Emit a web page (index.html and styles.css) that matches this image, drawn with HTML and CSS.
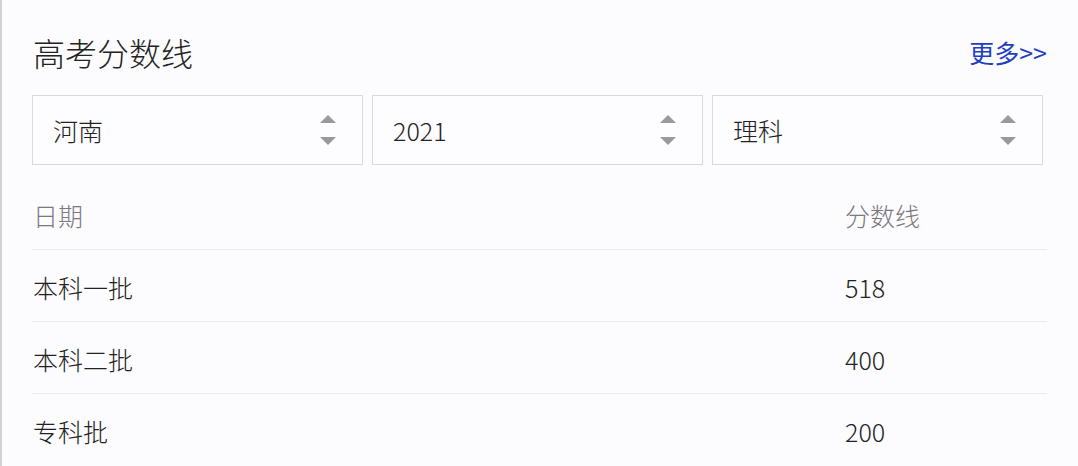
FILE: index.html
```html
<!DOCTYPE html>
<html lang="zh-CN">
<head>
<meta charset="utf-8">
<title>高考分数线</title>
<link rel="stylesheet" href="styles.css">
</head>
<body>
<div class="card">
  <div class="head">
    <h1 class="title">高考分数线</h1>
    <a class="more" href="#">更多&gt;&gt;</a>
  </div>
  <div class="selects">
    <div class="select"><span class="val">河南</span><span class="arrows"><i class="up"></i><i class="down"></i></span></div>
    <div class="select"><span class="val">2021</span><span class="arrows"><i class="up"></i><i class="down"></i></span></div>
    <div class="select"><span class="val">理科</span><span class="arrows"><i class="up"></i><i class="down"></i></span></div>
  </div>
  <div class="table">
    <div class="row th"><span class="c1">日期</span><span class="c2">分数线</span></div>
    <div class="row"><span class="c1">本科一批</span><span class="c2">518</span></div>
    <div class="row"><span class="c1">本科二批</span><span class="c2">400</span></div>
    <div class="row last"><span class="c1">专科批</span><span class="c2">200</span></div>
  </div>
</div>
</body>
</html>
```

FILE: styles.css
```css
* { box-sizing: border-box; }
html, body { margin: 0; padding: 0; }
body {
  background: #fcfbfd;
  font-family: "Noto Sans CJK SC", "Noto Sans", sans-serif;
  font-weight: 300;
  color: #222;
  width: 1078px;
  height: 466px;
  overflow: hidden;
}
.card {
  border-left: 2px solid #d3d2d9;
  padding: 31px 31px 0 30px;
  height: 466px;
}
.head {
  display: flex;
  justify-content: space-between;
  align-items: center;
  height: 42px;
  margin-bottom: 22px;
}
.title {
  margin: 0;
  font-size: 32px;
  font-weight: 300;
  line-height: 42px;
  color: #222;
  padding-left: 1px;
}
.more {
  font-size: 25px;
  line-height: 42px;
  color: #1f3fc2;
  font-weight: 400;
  text-decoration: none;
}
.selects {
  display: grid;
  grid-template-columns: 331px 331px 331px;
  column-gap: 9px;
}
.select {
  height: 70px;
  border: 1px solid #d9d8de;
  background: #fdfcfe;
  display: flex;
  align-items: center;
  justify-content: space-between;
  padding: 0 26px 0 20px;
}
.val {
  font-size: 25px;
  color: #222;
  line-height: 30px;
}
.arrows {
  display: flex;
  flex-direction: column;
  gap: 14px;
}
.arrows i {
  display: block;
  width: 0;
  height: 0;
  border-left: 8px solid transparent;
  border-right: 8px solid transparent;
}
.arrows .up { border-bottom: 8px solid #9a999e; }
.arrows .down { border-top: 8px solid #9a999e; }
.table {
  margin-top: 15px;
  width: 1015px;
}
.row {
  display: flex;
  align-items: center;
  height: 72px;
  border-bottom: 1px solid #ecebef;
  font-size: 25px;
  padding-top: 2px;
  padding-left: 1px;
}
.row.th {
  height: 70px;
  padding-top: 0;
  color: #7a797e;
}
.row.last { border-bottom: none; }
.c1 { width: 812px; }
.c2 { flex: 1; }
```
